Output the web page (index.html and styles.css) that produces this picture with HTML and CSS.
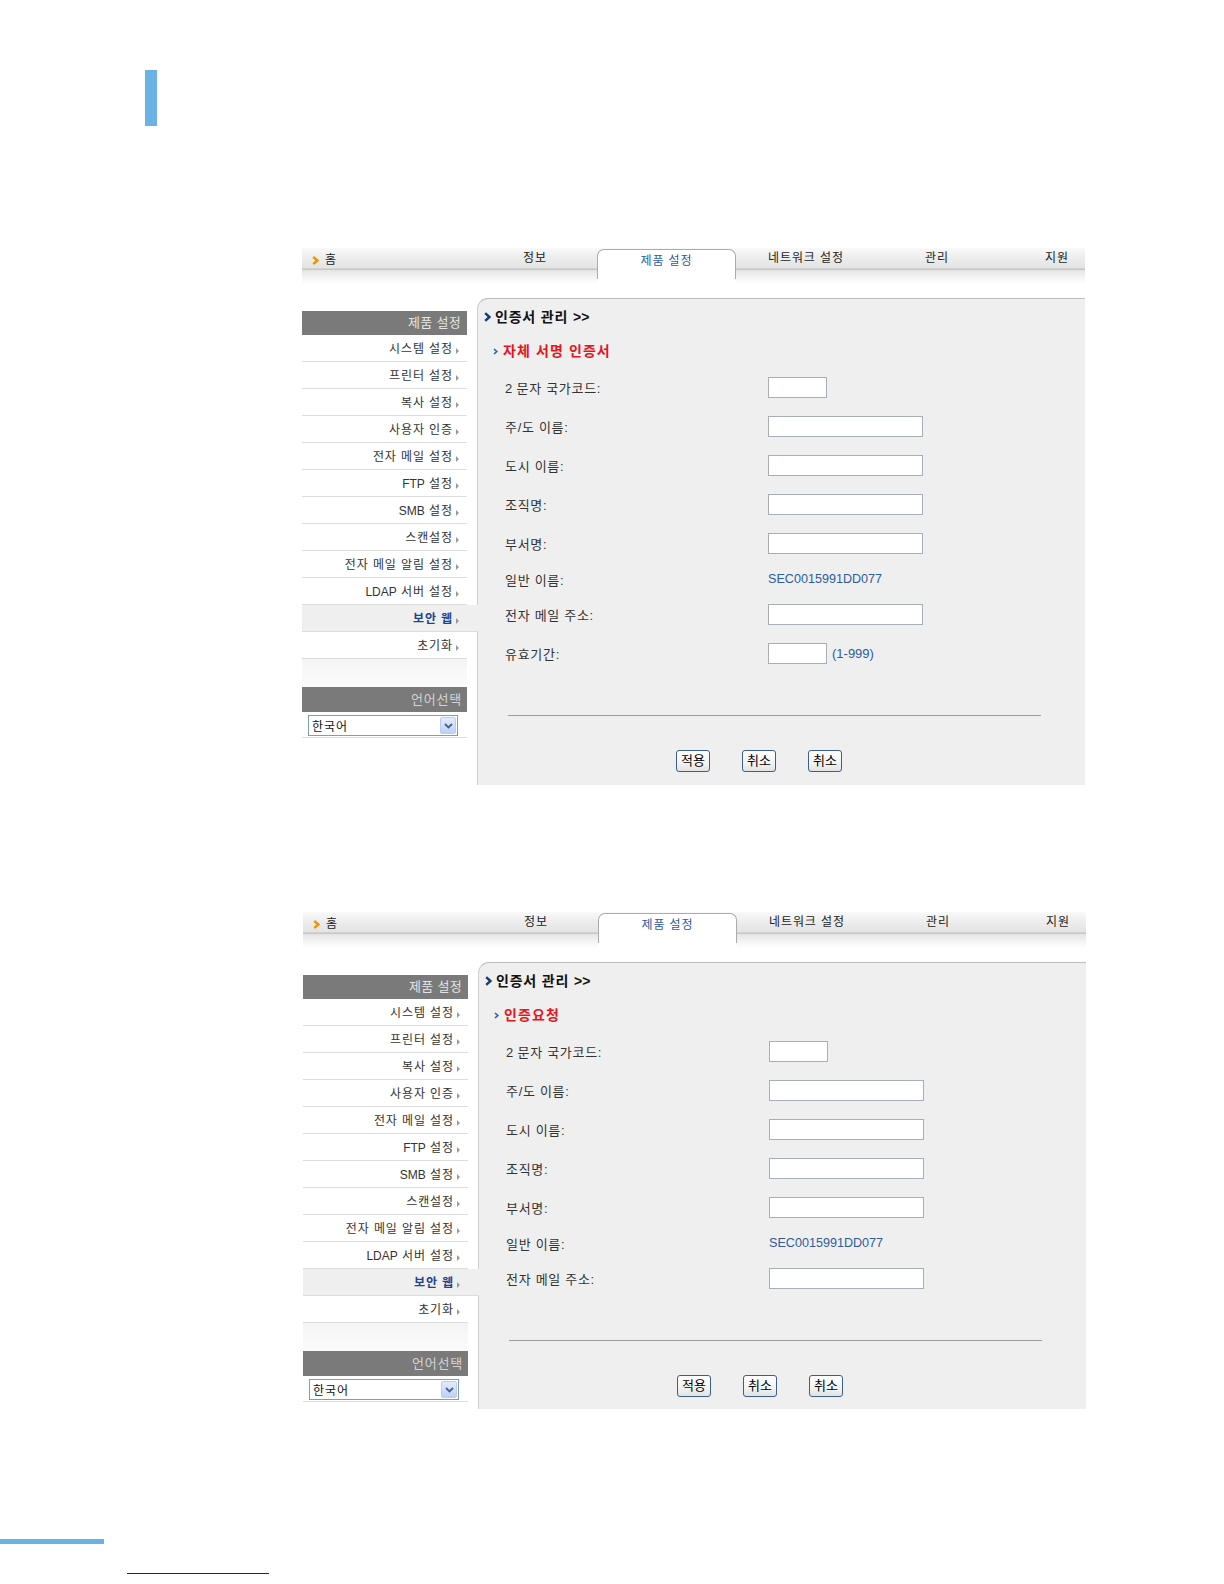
FILE: index.html
```html
<!DOCTYPE html>
<html lang="ko">
<head>
<meta charset="utf-8">
<title>인증서 관리</title>
<link rel="stylesheet" href="styles.css">
</head>
<body>
<div class="page">
  <div class="mark"></div>

  <section class="shot shot1">
    <nav class="nav">
      <div class="nav-home"><svg class="home-chev" width="7" height="9" viewBox="0 0 7 9"><polyline points="1.2,1 5.5,4.5 1.2,8" fill="none" stroke="#f39200" stroke-width="2.4"/></svg><span>홈</span></div>
      <div class="nav-item info">정보</div>
      <div class="nav-tab">제품 설정</div>
      <div class="nav-item net">네트워크 설정</div>
      <div class="nav-item mgmt">관리</div>
      <div class="nav-item support">지원</div>
    </nav>
    <div class="main">
      <aside class="sidebar">
        <div class="side-head">제품 설정</div>
        <ul class="side-menu">
          <li>시스템 설정</li>
          <li>프린터 설정</li>
          <li>복사 설정</li>
          <li>사용자 인증</li>
          <li>전자 메일 설정</li>
          <li><span class="lat">FTP</span> 설정</li>
          <li><span class="lat">SMB</span> 설정</li>
          <li>스캔설정</li>
          <li>전자 메일 알림 설정</li>
          <li><span class="lat">LDAP</span> 서버 설정</li>
          <li class="active">보안 웹</li>
          <li>초기화</li>
        </ul>
        <div class="side-strip"></div>
        <div class="side-head lang">언어선택</div>
        <div class="lang-row">
          <div class="fake-select"><span class="sel-text">한국어</span><span class="sel-btn"><svg width="9" height="6" viewBox="0 0 9 6"><polyline points="1,1 4.5,4.5 8,1" fill="none" stroke="#4d6185" stroke-width="1.8"/></svg></span></div>
        </div>
      </aside>
      <div class="panel">
        <h2 class="panel-title"><svg width="7" height="10" viewBox="0 0 7 10"><polyline points="1.2,1.2 5.4,5 1.2,8.8" fill="none" stroke="#173a78" stroke-width="2.4"/></svg><span>인증서 관리</span><span class="lat">&gt;&gt;</span></h2>
        <h3 class="panel-sub"><svg width="5" height="7" viewBox="0 0 5 7"><polyline points="1,1 3.8,3.5 1,6" fill="none" stroke="#2f5ea6" stroke-width="1.6"/></svg>자체 서명 인증서</h3>
        <div class="form">
          <div class="row"><span class="label"><span class="lat">2</span> 문자 국가코드:</span><input class="field short" type="text"></div>
          <div class="row"><span class="label">주/도 이름:</span><input class="field" type="text"></div>
          <div class="row"><span class="label">도시 이름:</span><input class="field" type="text"></div>
          <div class="row"><span class="label">조직명:</span><input class="field" type="text"></div>
          <div class="row"><span class="label">부서명:</span><input class="field" type="text"></div>
          <div class="row text-row"><span class="label">일반 이름:</span><span class="value">SEC0015991DD077</span></div>
          <div class="row"><span class="label">전자 메일 주소:</span><input class="field" type="text"></div>
          <div class="row"><span class="label">유효기간:</span><input class="field short" type="text"><span class="range">(1-999)</span></div>
        </div>
        <div class="rule"></div>
        <div class="buttons"><button class="btn" type="button">적용</button><button class="btn" type="button">취소</button><button class="btn" type="button">취소</button></div>
      </div>
    </div>
  </section>

  <section class="shot shot2">
    <nav class="nav">
      <div class="nav-home"><svg class="home-chev" width="7" height="9" viewBox="0 0 7 9"><polyline points="1.2,1 5.5,4.5 1.2,8" fill="none" stroke="#f39200" stroke-width="2.4"/></svg><span>홈</span></div>
      <div class="nav-item info">정보</div>
      <div class="nav-tab">제품 설정</div>
      <div class="nav-item net">네트워크 설정</div>
      <div class="nav-item mgmt">관리</div>
      <div class="nav-item support">지원</div>
    </nav>
    <div class="main">
      <aside class="sidebar">
        <div class="side-head">제품 설정</div>
        <ul class="side-menu">
          <li>시스템 설정</li>
          <li>프린터 설정</li>
          <li>복사 설정</li>
          <li>사용자 인증</li>
          <li>전자 메일 설정</li>
          <li><span class="lat">FTP</span> 설정</li>
          <li><span class="lat">SMB</span> 설정</li>
          <li>스캔설정</li>
          <li>전자 메일 알림 설정</li>
          <li><span class="lat">LDAP</span> 서버 설정</li>
          <li class="active">보안 웹</li>
          <li>초기화</li>
        </ul>
        <div class="side-strip"></div>
        <div class="side-head lang">언어선택</div>
        <div class="lang-row">
          <div class="fake-select"><span class="sel-text">한국어</span><span class="sel-btn"><svg width="9" height="6" viewBox="0 0 9 6"><polyline points="1,1 4.5,4.5 8,1" fill="none" stroke="#4d6185" stroke-width="1.8"/></svg></span></div>
        </div>
      </aside>
      <div class="panel panel-short">
        <h2 class="panel-title"><svg width="7" height="10" viewBox="0 0 7 10"><polyline points="1.2,1.2 5.4,5 1.2,8.8" fill="none" stroke="#173a78" stroke-width="2.4"/></svg><span>인증서 관리</span><span class="lat">&gt;&gt;</span></h2>
        <h3 class="panel-sub"><svg width="5" height="7" viewBox="0 0 5 7"><polyline points="1,1 3.8,3.5 1,6" fill="none" stroke="#2f5ea6" stroke-width="1.6"/></svg>인증요청</h3>
        <div class="form">
          <div class="row"><span class="label"><span class="lat">2</span> 문자 국가코드:</span><input class="field short" type="text"></div>
          <div class="row"><span class="label">주/도 이름:</span><input class="field" type="text"></div>
          <div class="row"><span class="label">도시 이름:</span><input class="field" type="text"></div>
          <div class="row"><span class="label">조직명:</span><input class="field" type="text"></div>
          <div class="row"><span class="label">부서명:</span><input class="field" type="text"></div>
          <div class="row text-row"><span class="label">일반 이름:</span><span class="value">SEC0015991DD077</span></div>
          <div class="row"><span class="label">전자 메일 주소:</span><input class="field" type="text"></div>
        </div>
        <div class="rule"></div>
        <div class="buttons"><button class="btn" type="button">적용</button><button class="btn" type="button">취소</button><button class="btn" type="button">취소</button></div>
      </div>
    </div>
  </section>

  <div class="foot-bar"></div>
  <div class="foot-line"></div>
</div>
</body>
</html>
```

FILE: styles.css
```css
* { box-sizing: border-box; }
html, body { margin: 0; padding: 0; background: #fff; }
body {
  font-family: "Liberation Sans", "Noto Sans CJK KR", sans-serif;
  color: #222;
}
.page { width: 1224px; height: 1584px; overflow: hidden; }
.lat { letter-spacing: 0; }

.mark { width: 12px; height: 56px; margin: 70px 0 0 145px; background: #6ab2e4; }

.shot { width: 783px; }
.shot1 { margin: 122px 0 0 302px; }
.shot2 { margin: 127px 0 0 303px; }

/* top navigation */
.nav {
  display: flex;
  height: 37px;
  font-size: 12px;
  line-height: 20px;
  letter-spacing: 0.9px;
  color: #222;
  background: linear-gradient(#f9f9f9 0, #efefef 8px, #e3e3e3 20px, #c6c6c6 21px, #c6c6c6 22px, #e4e4e4 22px, #f3f3f3 29px, #fff 37px);
}
.nav-home { width: 221px; height: 22px; padding: 2px 0 0 10px; display: flex; align-items: center; gap: 6px; }
.home-chev { display: block; }
.nav-item { height: 22px; }
.info { width: 74px; }
.net { width: 157px; margin-left: 32px; }
.mgmt { width: 120px; }
.support { flex: 1; }
.nav-tab {
  width: 139px;
  height: 30px;
  margin-top: 1px;
  padding-top: 2px;
  line-height: 18px;
  text-align: center;
  color: #2c5ca0;
  background: #fff;
  border: 1px solid #ababab;
  border-bottom: none;
  border-radius: 7px 7px 0 0;
  box-shadow: 0 6px 0 #fff;
}

/* body */
.main { display: flex; margin-top: 13px; }
.sidebar { width: 175px; flex-shrink: 0; padding-top: 13px; background: #fff; }
.side-head {
  width: 165px;
  height: 24px;
  line-height: 24px;
  padding-right: 6px;
  text-align: right;
  font-size: 13px;
  letter-spacing: 0.3px;
  color: #e4e4e4;
  background: #7a7a7a;
}
.side-head.lang { height: 25px; line-height: 25px; color: #d2d2d2; letter-spacing: 0.8px; padding-right: 5px; }
.side-menu { list-style: none; margin: 0; padding: 0; }
.side-menu li {
  width: 165px;
  height: 27px;
  line-height: 28px;
  padding-right: 8px;
  text-align: right;
  font-size: 12px;
  letter-spacing: 0.9px;
  color: #333;
  border-bottom: 1px solid #dcdcdc;
}
.side-menu li::after {
  content: "";
  display: inline-block;
  margin-left: 3px;
  vertical-align: -1px;
  border-left: 3px solid #9a9a9a;
  border-top: 3px solid transparent;
  border-bottom: 3px solid transparent;
}
.side-menu li.active {
  position: relative;
  z-index: 1;
  width: 176px;
  padding-right: 19px;
  margin-right: -1px;
  background: #efefef;
  color: #1d4391;
  font-weight: bold;
}
.side-strip { width: 165px; height: 28px; background: linear-gradient(#f3f3f3, #f8f8f8 40%, #fbfbfb); }
.lang-row { width: 165px; height: 26px; padding: 3px 0 0 6px; border-bottom: 1px solid #dcdcdc; }
.fake-select {
  width: 150px;
  height: 21px;
  display: flex;
  align-items: center;
  justify-content: space-between;
  padding-left: 3px;
  border: 1px solid #7f9db9;
  background: #fff;
  font-size: 12px;
  letter-spacing: 0.9px;
  color: #111;
}
.sel-btn {
  width: 16px;
  height: 17px;
  margin-right: 1px;
  display: flex;
  align-items: center;
  justify-content: center;
  border: 1px solid #b9cdf2;
  border-radius: 2px;
  background: linear-gradient(#e3ecfd, #bcd0f7);
}

/* content panel */
.panel {
  flex: 1;
  height: 487px;
  background: #efefef;
  border-top: 1px solid #bdbdbd;
  border-left: 1px solid #cfcfcf;
  border-radius: 11px 0 0 0;
}
.panel-short { height: 447px; }
.panel-title {
  margin: 0;
  padding: 9px 0 0 6px;
  height: 27px;
  display: flex;
  align-items: center;
  gap: 4px;
  font-size: 14px;
  line-height: 18px;
  letter-spacing: 0.8px;
  font-weight: bold;
  color: #111;
}
.panel-title .lat { margin-left: 1px; }
.panel-title svg { display: block; flex-shrink: 0; }
.panel-sub {
  margin: 16px 0 0 0;
  padding-left: 15px;
  height: 18px;
  display: flex;
  align-items: center;
  gap: 5px;
  font-size: 14px;
  line-height: 18px;
  letter-spacing: 1.1px;
  font-weight: bold;
  color: #e8141b;
}
.panel-sub svg { display: block; flex-shrink: 0; }
.form { margin-top: 8px; }
.row { display: flex; align-items: center; height: 39px; padding-left: 27px; font-size: 13px; color: #333; }
.text-row { height: 32px; }
.label { width: 263px; flex-shrink: 0; letter-spacing: 0.7px; }
.value { color: #2f5c9c; font-size: 12.6px; }
.range { margin-left: 5px; color: #2f5c9c; }
.field {
  width: 155px;
  height: 21px;
  margin: 0;
  padding: 0;
  border: 1px solid #a7aeb8;
  background: #fff;
}
.field.short { width: 59px; }
.rule { margin: 42px 0 0 30px; width: 533px; height: 1px; background: #9c9c9c; }
.buttons { display: flex; gap: 32px; margin-top: 34px; padding-left: 198px; }
.btn {
  width: 34px;
  height: 22px;
  margin: 0;
  padding: 0;
  font-family: "Liberation Sans", "Noto Sans CJK KR", sans-serif;
  font-size: 13px;
  line-height: 18px;
  color: #000;
  border: 1px solid #3b5e8c;
  border-radius: 3px;
  background: linear-gradient(#fff, #f3f3f3 60%, #e2e2e2);
}

.foot-bar { width: 104px; height: 5px; margin-top: 130px; background: #6ab2e4; }
.foot-line { width: 142px; height: 1px; margin: 29px 0 0 127px; background: #1c1c80; }
```
